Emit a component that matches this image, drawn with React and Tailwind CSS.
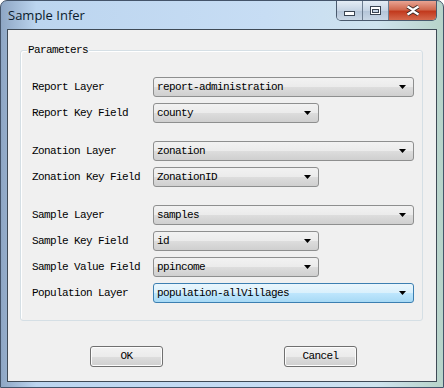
import React from 'react';

const mono = { fontFamily: '"Liberation Mono", "Courier New", monospace' };

const rows = [
  [
    { label: 'Report Layer', value: 'report-administration', wide: true },
    { label: 'Report Key Field', value: 'county' },
  ],
  [
    { label: 'Zonation Layer', value: 'zonation', wide: true },
    { label: 'Zonation Key Field', value: 'ZonationID' },
  ],
  [
    { label: 'Sample Layer', value: 'samples', wide: true },
    { label: 'Sample Key Field', value: 'id' },
    { label: 'Sample Value Field', value: 'ppincome' },
    { label: 'Population Layer', value: 'population-allVillages', wide: true, active: true },
  ],
];

const Arrow = () => (
  <svg width="7" height="4" viewBox="0 0 7 4" className="shrink-0">
    <path d="M0 0h7L3.5 4z" fill="#000" />
  </svg>
);

const Combo = ({ value, wide, active }) => (
  <div
    className={`h-[20px] flex items-center justify-between pl-[3px] pr-[7px] rounded-[3px] border text-[11px] tracking-[-0.6px] text-black ${
      wide ? 'w-[261px]' : 'w-[166px]'
    } ${
      active
        ? 'border-[#3c7fb1] bg-[linear-gradient(#eaf6fd_0%,#d9f0fc_50%,#bee6fd_51%,#a7d9f5_100%)]'
        : 'border-[#8e8f8f] bg-[linear-gradient(#f2f2f2_0%,#ebebeb_50%,#dddddd_51%,#cfcfcf_100%)]'
    }`}
    style={mono}
  >
    <span>{value}</span>
    <Arrow />
  </div>
);

const Row = ({ label, value, wide, active }) => (
  <div className="flex items-center h-[20px]">
    <div className="w-[121px] text-[11px] tracking-[-0.6px] text-black" style={mono}>
      {label}
    </div>
    <Combo value={value} wide={wide} active={active} />
  </div>
);

const Button = ({ children }) => (
  <button
    className="w-[73px] h-[21px] rounded-[3px] border border-[#707070] bg-[linear-gradient(#f2f2f2_0%,#ebebeb_50%,#dddddd_51%,#cfcfcf_100%)] text-[11px] tracking-[-0.6px] text-black shadow-[inset_0_0_0_1px_#fcfcfc]"
    style={mono}
  >
    {children}
  </button>
);

const CaptionButtons = () => (
  <div className="flex h-[20px] rounded-b-[5px] border border-t-0 border-[#4a5a6e] overflow-hidden">
    <div className="w-[26px] flex items-center justify-center border-r border-[#6d7d90] bg-[linear-gradient(#e4ecf5,#c6d4e4_50%,#b3c4d8_51%,#c9d7e6)]">
      <svg width="11" height="5" viewBox="0 0 11 5" className="mt-[5px]">
        <rect x="0.5" y="0.5" width="10" height="4" fill="#fff" stroke="#3a4452" />
      </svg>
    </div>
    <div className="w-[26px] flex items-center justify-center border-r border-[#6d7d90] bg-[linear-gradient(#e4ecf5,#c6d4e4_50%,#b3c4d8_51%,#c9d7e6)]">
      <svg width="11" height="9" viewBox="0 0 11 9">
        <rect x="0.5" y="0.5" width="10" height="8" fill="#fff" stroke="#3a4452" />
        <rect x="2.5" y="3.5" width="6" height="3" fill="#c6d4e4" stroke="#3a4452" />
      </svg>
    </div>
    <div className="w-[47px] flex items-center justify-center bg-[linear-gradient(#e8a493,#d0694f_45%,#c23a1e_55%,#d5694d)]">
      <svg width="16" height="11" viewBox="0 0 16 11">
        <path d="M2.5 1.5l5.5 3.5l5.5-3.5M2.5 9.5l5.5-3.5l5.5 3.5" stroke="#3a2a26" strokeWidth="4" fill="none" />
        <path d="M2.5 1.5l5.5 3.5l5.5-3.5M2.5 9.5l5.5-3.5l5.5 3.5" stroke="#fff" strokeWidth="2.2" fill="none" />
      </svg>
    </div>
  </div>
);

export default function App() {
  return (
    <div className="w-[444px] h-[388px] flex flex-col rounded-t-[7px] border border-[#44546a] bg-[linear-gradient(90deg,#8ea6c4_0%,#bcd5ef_8%,#c7ddf4_60%,#cfe3ee_85%,#b7d3c9_100%)] overflow-hidden">
      <div className="h-[28px] flex items-start justify-between pl-[7px] pr-[6px] shrink-0">
        <span
          className="mt-[5px] text-[13px] text-[#0b1a2c]"
          style={{ fontFamily: '"Open Sans", "Noto Sans", sans-serif' }}
        >
          Sample Infer
        </span>
        <CaptionButtons />
      </div>
      <div className="mx-[6px] mb-[5px] flex-1 flex flex-col border border-[#3f4a56] bg-[#f0f0f0]">
        <div className="relative mt-[20px] ml-[12px] mr-[13px] h-[271px] rounded-[3px] border border-[#d5dfe5] shadow-[inset_1px_1px_0_#fff] pl-[11px] pt-[26px]">
          <span
            className="absolute left-[6px] top-[-9px] px-[1px] bg-[#f0f0f0] text-[11px] tracking-[-0.6px] text-black"
            style={mono}
          >
            Parameters
          </span>
          <div className="flex flex-col gap-[18px]">
            {rows.map((group, i) => (
              <div key={i} className="flex flex-col gap-[6px]">
                {group.map(r => (
                  <Row key={r.label} {...r} />
                ))}
              </div>
            ))}
          </div>
        </div>
        <div className="mt-[25px] flex pl-[82px] gap-[121px]">
          <Button>OK</Button>
          <Button>Cancel</Button>
        </div>
      </div>
    </div>
  );
}
